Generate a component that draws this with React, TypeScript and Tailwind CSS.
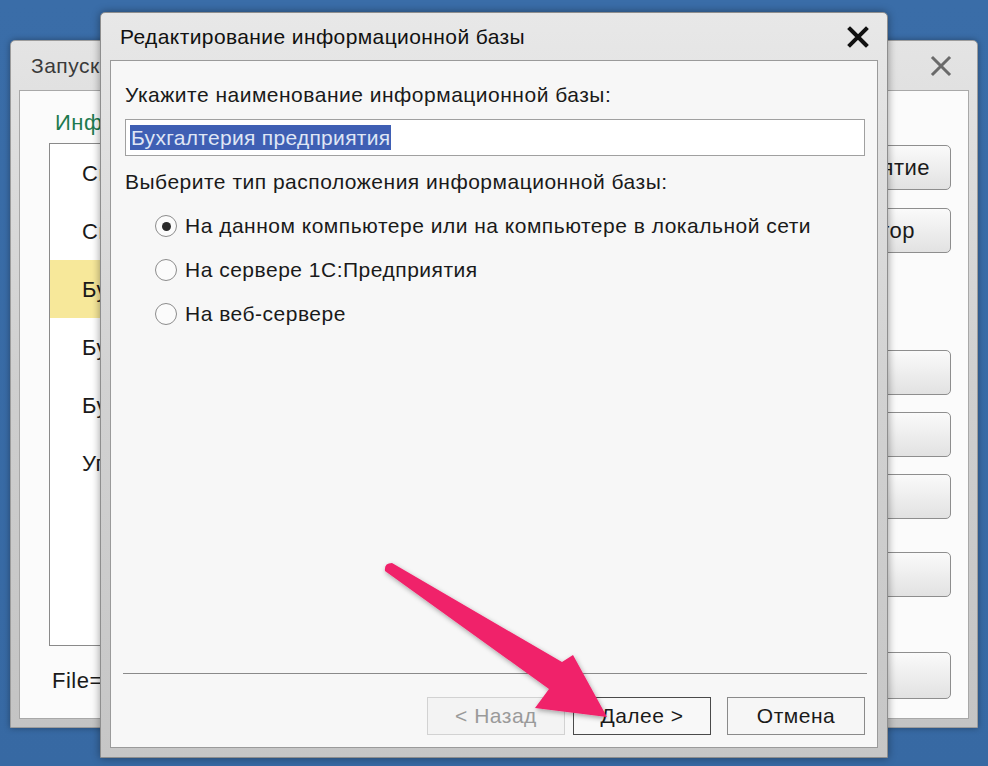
import React from 'react';

const font = { fontFamily: '"Liberation Sans", Arial, sans-serif' };

const bgButtons = [
    { cls: 'mt-[54px] h-[45px] justify-end pr-[20px]', label: '1С:Предприятие' },
    { cls: 'mt-[18px] h-[45px] justify-end pr-[35px]', label: 'Конфигуратор' },
    { cls: 'mt-[97px] h-[45px] justify-start pl-[24px]', label: 'Добавить...' },
    { cls: 'mt-[17px] h-[45px] justify-start pl-[24px]', label: 'Изменить...' },
    { cls: 'mt-[17px] h-[45px] justify-start pl-[24px]', label: 'Удалить' },
    { cls: 'mt-[33px] h-[45px] justify-start pl-[24px]', label: 'Настройка...' },
    { cls: 'mt-[55px] h-[47px] justify-start pl-[24px]', label: 'Выход' },
];

const bases = [
    'Сводная отчетность',
    'Склад и торговля',
    'Бухгалтерия предприятия',
    'Бухгалтерия предприятия (демо)',
    'Бухгалтерия для Украины',
    'Управление торговлей',
];

const CloseX = ({ color, width }: { color: string; width: number }) => (
    <svg width="24" height="24" viewBox="0 0 24 24">
        <path d="M4 4 L20 20 M20 4 L4 20" stroke={color} strokeWidth={width} strokeLinecap="square" />
    </svg>
);

const Radio = ({ checked, label }: { checked?: boolean; label: string }) => (
    <div className="flex items-center h-[44px]">
        <div className="w-[22px] h-[22px] rounded-full border border-[#8c8c8c] bg-[#fbfbfb] flex items-center justify-center">
            {checked && <div className="w-[9px] h-[9px] rounded-full bg-[#2a2a2a]" />}
        </div>
        <span className="ml-[8px] text-[21px] tracking-[0.5px] text-[#1a1a1a]">{label}</span>
    </div>
);

const LauncherWindow = () => (
    <div className="absolute left-[10px] top-[40px] w-[968px] h-[688px] rounded-t-[5px] border border-[#9c9c9c] bg-gradient-to-b from-[#e4e4e4] via-[#cfcfcf] to-[#c4c4c4] flex flex-col px-[8px] pb-[8px] shadow-[0_0_6px_rgba(0,0,0,0.35)]">
        <div className="h-[49px] flex items-center justify-between pl-[12px] pr-[16px] shrink-0">
            <span className="text-[21px] tracking-[0.5px] text-[#3a3a3a]">Запуск 1С:Предприятия</span>
            <CloseX color="#6a6a6a" width={3} />
        </div>
        <div className="flex-1 bg-[#fbfbfb] border border-[#a8a8a8] flex">
            <div className="flex-1 flex flex-col pl-[29px]">
                <div className="h-[48px] pl-[6px] flex items-end text-[22px] tracking-[0.5px] text-[#1d7a4f]">Информационные базы</div>
                <div className="mt-[4px] h-[503px] border border-[#8a8a8a] bg-white flex flex-col mr-[40px]">
                    {bases.map((b, i) => (
                        <div
                            key={b}
                            className={`h-[58px] flex items-center pl-[32px] text-[22px] tracking-[0.5px] text-[#1a1a1a] ${i === 2 ? 'bg-[#f7e89a]' : ''}`}
                        >
                            {b}
                        </div>
                    ))}
                </div>
                <div className="mt-[18px] pl-[3px] text-[22px] tracking-[0.5px] text-[#1a1a1a]">File="C:\Users\1C\Documents\Base"</div>
            </div>
            <div className="w-[250px] pr-[17px] flex flex-col items-end">
                {bgButtons.map((b) => (
                    <div
                        key={b.label}
                        className={`${b.cls} w-[230px] rounded-[5px] border border-[#8e8e8e] bg-gradient-to-b from-[#fafafa] to-[#e2e2e2] flex items-center text-[22px] tracking-[0.5px] text-[#1a1a1a]`}
                    >
                        {b.label}
                    </div>
                ))}
            </div>
        </div>
    </div>
);

const Btn = ({ label, kind }: { label: string; kind: 'disabled' | 'default' | 'normal' }) => {
    const cls =
        kind === 'disabled'
            ? 'border-[#d2d2d2] text-[#9a9a9a] bg-[#f3f3f3]'
            : kind === 'default'
            ? 'border-[#4a4a4a] text-[#1a1a1a] bg-[#f8f8f8]'
            : 'border-[#8a8a8a] text-[#1a1a1a] bg-[#f6f6f6]';
    return (
        <div className={`w-[138px] h-[38px] border flex items-center justify-center text-[21px] tracking-[0.5px] ${cls}`}>
            {label}
        </div>
    );
};

const EditDialog = () => (
    <div className="absolute left-[100px] top-[12px] w-[788px] h-[746px] rounded-t-[5px] border border-[#8e8e8e] bg-gradient-to-b from-[#e8e8e8] via-[#d2d2d2] to-[#c6c6c6] flex flex-col px-[9px] pb-[9px] shadow-[0_0_8px_rgba(0,0,0,0.4)]">
        <div className="h-[47px] flex items-center justify-between pl-[10px] pr-[8px] shrink-0">
            <span className="text-[21px] tracking-[0.4px] text-[#111]">Редактирование информационной базы</span>
            <CloseX color="#111" width={4} />
        </div>
        <div className="flex-1 bg-[#f7f7f7] border border-[#9a9a9a] flex flex-col pl-[14px] pr-[12px]">
            <div className="mt-[21px] text-[21px] tracking-[0.5px] text-[#1a1a1a] leading-[26px]">
                Укажите наименование информационной базы:
            </div>
            <div className="mt-[11px] h-[37px] border border-[#a0a0a0] bg-white flex items-center pl-[4px]">
                <span className="bg-[#3f5fb4] text-[#dfe6f5] text-[21px] tracking-[0.3px] leading-[25px] px-[1px]">
                    Бухгалтерия предприятия
                </span>
            </div>
            <div className="mt-[13px] text-[21px] tracking-[0.5px] text-[#1a1a1a] leading-[26px]">
                Выберите тип расположения информационной базы:
            </div>
            <div className="mt-[9px] pl-[30px] flex flex-col">
                <Radio checked label="На данном компьютере или на компьютере в локальной сети" />
                <Radio label="На сервере 1С:Предприятия" />
                <Radio label="На веб-сервере" />
            </div>
            <div className="flex-1" />
            <div className="h-px bg-[#8a8a8a] mx-[-2px]" />
            <div className="mt-[23px] mb-[12px] flex justify-end">
                <Btn label="< Назад" kind="disabled" />
                <div className="w-[8px]" />
                <Btn label="Далее >" kind="default" />
                <div className="w-[16px]" />
                <Btn label="Отмена" kind="normal" />
            </div>
        </div>
    </div>
);

const Arrow = () => (
    <svg className="absolute left-0 top-0 pointer-events-none" width="988" height="766" viewBox="0 0 988 766">
        <defs>
            <filter id="sh" x="-10%" y="-10%" width="130%" height="130%">
                <feDropShadow dx="1" dy="2" stdDeviation="2.5" floodColor="#000" floodOpacity="0.35" />
            </filter>
        </defs>
        <path
            d="M385 571 Q384 563 392 563 L562 662 L573 655 L607 717 L535 708 L549 689 Z"
            fill="#f0216a"
            filter="url(#sh)"
        />
    </svg>
);

export default function App() {
    return (
        <div
            className="relative w-[988px] h-[766px] overflow-hidden bg-gradient-to-b from-[#3a6da8] to-[#3769a3]"
            style={font}
        >
            <LauncherWindow />
            <EditDialog />
            <Arrow />
        </div>
    );
}
